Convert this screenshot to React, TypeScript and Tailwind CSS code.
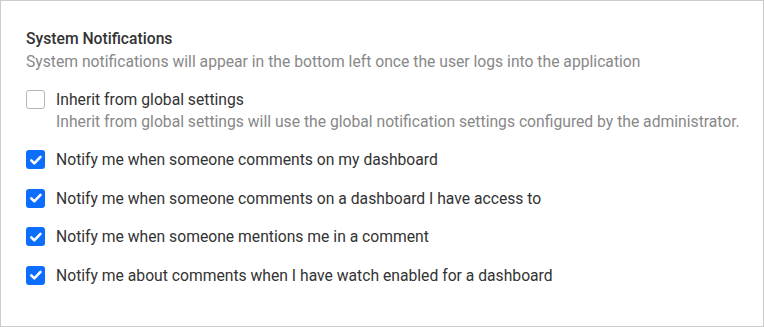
import { useState } from 'react';

const options = [
  { id: 'own', label: 'Notify me when someone comments on my dashboard' },
  { id: 'access', label: 'Notify me when someone comments on a dashboard I have access to' },
  { id: 'mention', label: 'Notify me when someone mentions me in a comment' },
  { id: 'watch', label: 'Notify me about comments when I have watch enabled for a dashboard' },
];

function Box({ checked, onClick }: { checked: boolean; onClick: () => void }) {
  return (
    <button
      type="button"
      onClick={onClick}
      className={
        checked
          ? 'flex h-[19px] w-[19px] shrink-0 items-center justify-center rounded-[3px] bg-[#0d6efd]'
          : 'flex h-[19px] w-[19px] shrink-0 items-center justify-center rounded-[3px] border border-[#b5b5b5] bg-white'
      }
    >
      {checked && (
        <svg viewBox="0 0 16 16" className="h-[16px] w-[16px]" fill="none">
          <path d="M3.3 8.3l3 3 6.2-6.4" stroke="white" strokeWidth="2.6" strokeLinecap="round" strokeLinejoin="round" />
        </svg>
      )}
    </button>
  );
}

export default function App() {
  const [inherit, setInherit] = useState(false);
  const [checked, setChecked] = useState<Record<string, boolean>>({
    own: true,
    access: true,
    mention: true,
    watch: true,
  });

  return (
    <div className="h-[327px] w-[764px] border border-[#cccccc] bg-white pl-[25px] pt-[27px] font-['Roboto',sans-serif] text-[15.7px]">
      <div className="font-medium leading-[22px] text-[#333333]">System Notifications</div>
      <div className="mt-px leading-[22px] text-[#888888]">
        System notifications will appear in the bottom left once the user logs into the application
      </div>

      <div className="mt-[17px] flex gap-[11px]">
        <Box checked={inherit} onClick={() => setInherit(!inherit)} />
        <div>
          <div className="leading-[19px] text-[#333333]">Inherit from global settings</div>
          <div className="mt-[3px] leading-[20px] text-[#888888]">
            Inherit from global settings will use the global notification settings configured by the administrator.
          </div>
        </div>
      </div>

      <div className="mt-[18px] flex flex-col gap-[19.5px]">
        {options.map((o) => (
          <div key={o.id} className="flex items-center gap-[11px]">
            <Box
              checked={checked[o.id]}
              onClick={() => setChecked({ ...checked, [o.id]: !checked[o.id] })}
            />
            <span className="leading-[19px] text-[#333333]">{o.label}</span>
          </div>
        ))}
      </div>
    </div>
  );
}
